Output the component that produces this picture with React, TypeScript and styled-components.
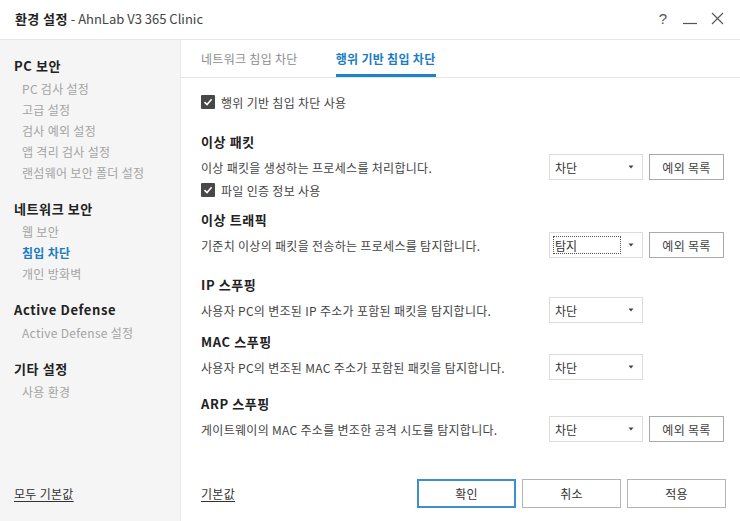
import styled, { createGlobalStyle } from 'styled-components';

const GlobalStyle = createGlobalStyle`
    html, body {
        margin: 0;
        padding: 0;
        background: #ffffff;
    }
    body {
        font-family: "Noto Sans CJK KR", "Noto Sans", sans-serif;
        color: #333;
    }
`;

interface Row {
    title: string;
    desc: string;
    value: string;
    focused?: boolean;
    exceptions?: boolean;
    fileCheck?: boolean;
    spaceTop: number;
}

const rows: Row[] = [
    {
        title: '이상 패킷',
        desc: '이상 패킷을 생성하는 프로세스를 처리합니다.',
        value: '차단',
        exceptions: true,
        fileCheck: true,
        spaceTop: 20,
    },
    {
        title: '이상 트래픽',
        desc: '기준치 이상의 패킷을 전송하는 프로세스를 탐지합니다.',
        value: '탐지',
        focused: true,
        exceptions: true,
        spaceTop: 10,
    },
    {
        title: 'IP 스푸핑',
        desc: '사용자 PC의 변조된 IP 주소가 포함된 패킷을 탐지합니다.',
        value: '차단',
        spaceTop: 17,
    },
    {
        title: 'MAC 스푸핑',
        desc: '사용자 PC의 변조된 MAC 주소가 포함된 패킷을 탐지합니다.',
        value: '차단',
        spaceTop: 9,
    },
    {
        title: 'ARP 스푸핑',
        desc: '게이트웨이의 MAC 주소를 변조한 공격 시도를 탐지합니다.',
        value: '차단',
        exceptions: true,
        spaceTop: 14,
    },
];

const menu = [
    {
        title: 'PC 보안',
        items: ['PC 검사 설정', '고급 설정', '검사 예외 설정', '앱 격리 검사 설정', '랜섬웨어 보안 폴더 설정'],
    },
    { title: '네트워크 보안', items: ['웹 보안', '침입 차단', '개인 방화벽'] },
    { title: 'Active Defense', items: ['Active Defense 설정'] },
    { title: '기타 설정', items: ['사용 환경'] },
];

const CheckBox = () => (
    <StyledCheckBox>
        <svg width="10" height="10" viewBox="0 0 10 10">
            <path d="M1.5 5.2 L4 7.6 L8.6 2.2" fill="none" stroke="#fff" strokeWidth="1.6" />
        </svg>
    </StyledCheckBox>
);

const App = () => {
    return (
        <StyledWindow>
            <GlobalStyle />
            <StyledTitleBar>
                <StyledTitle>
                    <b>환경 설정</b> - AhnLab V3 365 Clinic
                </StyledTitle>
                <StyledTitleIcons>
                    <StyledHelp>?</StyledHelp>
                    <svg width="14" height="14" viewBox="0 0 14 14">
                        <path d="M0 11.5 H14" stroke="#555" strokeWidth="1.2" />
                    </svg>
                    <svg width="13" height="13" viewBox="0 0 13 13">
                        <path d="M1 1 L12 12 M12 1 L1 12" stroke="#555" strokeWidth="1.1" />
                    </svg>
                </StyledTitleIcons>
            </StyledTitleBar>
            <StyledBody>
                <StyledSidebar>
                    {menu.map((group) => (
                        <StyledGroup key={group.title}>
                            <StyledGroupTitle>{group.title}</StyledGroupTitle>
                            {group.items.map((item) => (
                                <StyledMenuItem key={item} $active={item === '침입 차단'}>
                                    {item}
                                </StyledMenuItem>
                            ))}
                        </StyledGroup>
                    ))}
                    <StyledSidebarFooter>
                        <StyledLink>모두 기본값</StyledLink>
                    </StyledSidebarFooter>
                </StyledSidebar>
                <StyledMain>
                    <StyledTabs>
                        <StyledTab>네트워크 침입 차단</StyledTab>
                        <StyledTab $active>행위 기반 침입 차단</StyledTab>
                    </StyledTabs>
                    <StyledContent>
                        <StyledCheckRow>
                            <CheckBox />
                            행위 기반 침입 차단 사용
                        </StyledCheckRow>
                        {rows.map((row) => (
                            <StyledSection key={row.title} $spaceTop={row.spaceTop}>
                                <StyledSectionTitle>{row.title}</StyledSectionTitle>
                                <StyledSettingRow>
                                    <StyledDesc>{row.desc}</StyledDesc>
                                    <StyledSelect>
                                        <StyledSelectValue $focused={row.focused}>
                                            {row.value}
                                        </StyledSelectValue>
                                        <svg width="6" height="4" viewBox="0 0 6 4">
                                            <path d="M0.5 0.5 H5.5 L3 3.5 Z" fill="#444" />
                                        </svg>
                                    </StyledSelect>
                                    {row.exceptions && <StyledSmallButton>예외 목록</StyledSmallButton>}
                                </StyledSettingRow>
                                {row.fileCheck && (
                                    <StyledCheckRow>
                                        <CheckBox />
                                        파일 인증 정보 사용
                                    </StyledCheckRow>
                                )}
                            </StyledSection>
                        ))}
                    </StyledContent>
                    <StyledFooter>
                        <StyledLink>기본값</StyledLink>
                        <StyledFooterButtons>
                            <StyledButton $primary>확인</StyledButton>
                            <StyledButton>취소</StyledButton>
                            <StyledButton>적용</StyledButton>
                        </StyledFooterButtons>
                    </StyledFooter>
                </StyledMain>
            </StyledBody>
        </StyledWindow>
    );
};

const StyledWindow = styled.div`
    display: flex;
    flex-direction: column;
    width: 740px;
    height: 521px;
    overflow: hidden;
    background: #fff;
`;

const StyledTitleBar = styled.div`
    display: flex;
    align-items: center;
    justify-content: space-between;
    height: 40px;
    padding: 0 15px 2px 15px;
    box-sizing: border-box;
    border-bottom: 1px solid #e6e6e6;
    flex-shrink: 0;
`;

const StyledTitle = styled.div`
    font-size: 13px;
    color: #444;

    b {
        font-weight: 700;
        color: #1e1e1e;
        letter-spacing: 0.4px;
    }
`;

const StyledTitleIcons = styled.div`
    display: flex;
    align-items: center;
    gap: 14px;
    padding-right: 1px;
`;

const StyledHelp = styled.span`
    font-size: 15px;
    color: #555;
    font-family: "Liberation Sans", sans-serif;
    margin-right: 2px;
`;

const StyledBody = styled.div`
    display: flex;
    flex: 1;
    min-height: 0;
`;

const StyledSidebar = styled.div`
    display: flex;
    flex-direction: column;
    gap: 14px;
    width: 180px;
    padding-top: 14px;
    background: #f5f5f5;
    border-right: 1px solid #e8e8e8;
    flex-shrink: 0;
`;

const StyledGroup = styled.div`
    display: flex;
    flex-direction: column;
`;

const StyledGroupTitle = styled.div`
    height: 24px;
    line-height: 24px;
    padding-left: 14px;
    font-size: 13px;
    font-weight: 700;
    letter-spacing: 0.6px;
    color: #222;
`;

const StyledMenuItem = styled.div<{ $active?: boolean }>`
    height: 21px;
    line-height: 21px;
    padding-left: 22px;
    font-size: 12px;
    letter-spacing: 0.3px;
    font-weight: ${({ $active }) => ($active ? 700 : 400)};
    color: ${({ $active }) => ($active ? '#1b7cc2' : '#a4a4a4')};
`;

const StyledSidebarFooter = styled.div`
    margin-top: auto;
    display: flex;
    align-items: center;
    height: 52px;
    padding-left: 14px;
    padding-bottom: 2px;
`;

const StyledLink = styled.span`
    font-size: 12px;
    letter-spacing: 0.3px;
    color: #333;
    text-decoration: underline;
    text-underline-offset: 2px;
`;

const StyledMain = styled.div`
    display: flex;
    flex-direction: column;
    flex: 1;
    min-width: 0;
`;

const StyledTabs = styled.div`
    display: flex;
    gap: 38px;
    height: 37px;
    padding-left: 20px;
    border-bottom: 1px solid #e4e4e4;
    flex-shrink: 0;
`;

const StyledTab = styled.div<{ $active?: boolean }>`
    display: flex;
    align-items: center;
    height: 37px;
    padding-top: 2px;
    box-sizing: border-box;
    font-size: 12px;
    letter-spacing: 0.3px;
    font-weight: ${({ $active }) => ($active ? 700 : 400)};
    color: ${({ $active }) => ($active ? '#1a7dc3' : '#8c8c8c')};
    border-bottom: 3px solid ${({ $active }) => ($active ? '#1e84c8' : 'transparent')};
`;

const StyledContent = styled.div`
    display: flex;
    flex-direction: column;
    padding: 14px 16px 0 20px;
    flex: 1;
`;

const StyledCheckRow = styled.div`
    display: flex;
    align-items: center;
    gap: 6px;
    height: 20px;
    font-size: 12px;
    letter-spacing: 0.3px;
    color: #444;
`;

const StyledCheckBox = styled.span`
    display: flex;
    align-items: center;
    justify-content: center;
    width: 14px;
    height: 14px;
    background: #484848;
    border-radius: 1px;
`;

const StyledSection = styled.div<{ $spaceTop: number }>`
    display: flex;
    flex-direction: column;
    margin-top: ${({ $spaceTop }) => $spaceTop}px;
`;

const StyledSectionTitle = styled.div`
    height: 20px;
    line-height: 20px;
    font-size: 13px;
    font-weight: 700;
    letter-spacing: 0.6px;
    color: #222;
`;

const StyledSettingRow = styled.div`
    display: grid;
    grid-template-columns: 1fr 94px 75px;
    align-items: center;
    column-gap: 6px;
    height: 26px;
    margin-top: 2px;
`;

const StyledDesc = styled.div`
    font-size: 12px;
    letter-spacing: 0.3px;
    color: #444;
    white-space: nowrap;
`;

const StyledSelect = styled.div`
    display: flex;
    align-items: center;
    justify-content: space-between;
    height: 26px;
    padding: 3px 8px 3px 3px;
    box-sizing: border-box;
    border: 1px solid #dcdcdc;
    background: #fff;
    font-size: 12px;
    color: #333;
`;

const StyledSelectValue = styled.div<{ $focused?: boolean }>`
    display: flex;
    align-items: center;
    width: 68px;
    height: 18px;
    padding-left: 1px;
    box-sizing: border-box;
    border: 1px dotted ${({ $focused }) => ($focused ? '#555' : 'transparent')};
`;

const StyledSmallButton = styled.div`
    display: flex;
    align-items: center;
    justify-content: center;
    height: 26px;
    box-sizing: border-box;
    border: 1px solid #a9a9a9;
    background: #fff;
    font-size: 12px;
    letter-spacing: 0.3px;
    color: #444;
`;

const StyledFooter = styled.div`
    display: flex;
    align-items: center;
    justify-content: space-between;
    height: 52px;
    padding: 0 14px 2px 20px;
    flex-shrink: 0;
`;

const StyledFooterButtons = styled.div`
    display: flex;
    gap: 6px;
`;

const StyledButton = styled.div<{ $primary?: boolean }>`
    display: flex;
    align-items: center;
    justify-content: center;
    width: 99px;
    height: 29px;
    box-sizing: border-box;
    border: ${({ $primary }) => ($primary ? '2px solid #3d8fcf' : '1px solid #b4b4b4')};
    background: #fff;
    font-size: 12px;
    letter-spacing: 0.3px;
    color: #333;
`;

export default App;
